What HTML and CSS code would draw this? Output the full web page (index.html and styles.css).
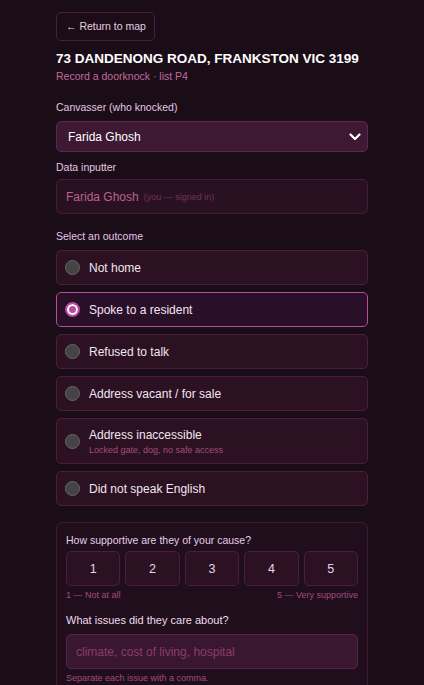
FILE: index.html
```html
<!DOCTYPE html>
<html lang="en">
<head>
  <meta charset="UTF-8">
  <meta name="viewport" content="width=device-width, initial-scale=1.0">
  <title>Record a doorknock</title>
  <link rel="stylesheet" href="styles.css">
</head>
<body>
  <div class="container">
    <a class="back-link" href="#">&larr; Return to map</a>

    <h1 class="address">73 DANDENONG ROAD, FRANKSTON VIC 3199</h1>
    <p class="subtitle">Record a doorknock &middot; list P4</p>

    <form id="knock-form">
      <div class="form-group">
        <label class="field-label" for="canvasser">Canvasser (who knocked)</label>
        <div class="select-wrap">
          <select id="canvasser" name="canvasser">
            <option>Farida Ghosh</option>
          </select>
          <svg class="chevron" width="12" height="8" viewBox="0 0 12 8">
            <path d="M1.5 1.5 L6 6 L10.5 1.5" fill="none" stroke="#fff" stroke-width="2.2" stroke-linecap="round" stroke-linejoin="round"/>
          </svg>
        </div>
      </div>

      <div class="form-group spaced">
        <span class="field-label tight">Data inputter</span>
        <div class="readonly-field">Farida Ghosh <span class="hint-inline">(you &mdash; signed in)</span></div>
      </div>

      <div class="form-group">
        <span class="field-label">Select an outcome</span>
        <div class="outcomes">
          <label class="outcome"><span class="radio"></span><span class="outcome-text">Not home</span></label>
          <label class="outcome selected"><span class="radio"></span><span class="outcome-text">Spoke to a resident</span></label>
          <label class="outcome"><span class="radio"></span><span class="outcome-text">Refused to talk</span></label>
          <label class="outcome"><span class="radio"></span><span class="outcome-text">Address vacant / for sale</span></label>
          <label class="outcome tall">
            <span class="radio"></span>
            <span class="outcome-text">Address inaccessible<small>Locked gate, dog, no safe access</small></span>
          </label>
          <label class="outcome"><span class="radio"></span><span class="outcome-text">Did not speak English</span></label>
        </div>
      </div>

      <div class="resident-box">
        <span class="box-label">How supportive are they of your cause?</span>
        <div class="scale">
          <button type="button">1</button>
          <button type="button">2</button>
          <button type="button">3</button>
          <button type="button">4</button>
          <button type="button">5</button>
        </div>
        <div class="scale-ends">
          <span>1 &mdash; Not at all</span>
          <span>5 &mdash; Very supportive</span>
        </div>

        <label class="box-label issues-label" for="issues">What issues did they care about?</label>
        <input type="text" id="issues" name="issues" placeholder="climate, cost of living, hospital">
        <p class="help">Separate each issue with a comma.</p>
      </div>
    </form>
  </div>
</body>
</html>
```

FILE: styles.css
```css
body {
  margin: 0;
  font-family: "Liberation Sans", Arial, sans-serif;
  background-color: #1b0d17;
  color: white;
}
.container {
  width: 312px;
  margin: 0 auto;
  padding-top: 12px;
}
.back-link {
  display: inline-block;
  box-sizing: border-box;
  height: 29px;
  line-height: 27px;
  padding: 0 8px 0 9px;
  border: 1px solid #4a1e3c;
  border-radius: 5px;
  color: #e6cde0;
  font-size: 10.5px;
  text-decoration: none;
}
.address {
  margin: 10px 0 0;
  font-size: 13.5px;
  line-height: 16px;
  font-weight: bold;
}
.subtitle {
  margin: 3px 0 0;
  font-size: 10.5px;
  line-height: 13px;
  color: #c06b9e;
}
#knock-form {
  margin-top: 18px;
}
.form-group {
  margin-bottom: 9px;
}
.form-group.spaced {
  margin-bottom: 16px;
}
.field-label {
  display: block;
  margin-bottom: 7px;
  font-size: 10.5px;
  line-height: 13px;
  color: #e2c8e4;
}
.field-label.tight {
  margin-bottom: 5px;
}
.select-wrap {
  position: relative;
}
select {
  width: 100%;
  height: 31px;
  padding: 0 11px;
  appearance: none;
  background-color: #3d1934;
  border: 1px solid #5a2850;
  border-radius: 5px;
  color: white;
  font-family: "Liberation Sans", Arial, sans-serif;
  font-size: 12px;
}
.chevron {
  position: absolute;
  right: 7px;
  top: 12px;
}
.readonly-field {
  box-sizing: border-box;
  height: 35px;
  padding: 0 9px;
  display: flex;
  align-items: center;
  background-color: #2a1121;
  border: 1px solid #441b38;
  border-radius: 5px;
  color: #b6648f;
  font-size: 12px;
}
.hint-inline {
  margin-left: 5px;
  font-size: 9px;
  color: #6f3358;
}
.outcomes {
  display: flex;
  flex-direction: column;
  gap: 7px;
}
.outcome {
  box-sizing: border-box;
  min-height: 35px;
  padding: 0 9px 0 8px;
  display: flex;
  align-items: center;
  gap: 9px;
  background-color: #2b1122;
  border: 1px solid #4b1d3e;
  border-radius: 5px;
  font-size: 12px;
  color: #f2e6f0;
}
.outcome.tall {
  min-height: 46px;
}
.outcome.selected {
  background-color: #2a0f29;
  border-color: #b54e9c;
}
.radio {
  box-sizing: border-box;
  flex: none;
  width: 15px;
  height: 15px;
  border-radius: 50%;
  background-color: #444;
  border: 1px solid #666;
}
.selected .radio {
  background-color: #b54e9c;
  border: 2px solid #b54e9c;
  box-shadow: inset 0 0 0 2px #fff;
}
.outcome-text small {
  display: block;
  margin-top: 3px;
  font-size: 9px;
  color: #a34c7e;
}
.resident-box {
  margin-top: 16px;
  padding: 11px 9px 6px;
  background-color: #200e1c;
  border: 1px solid #3e1a35;
  border-radius: 6px;
}
.box-label {
  display: block;
  font-size: 10.5px;
  line-height: 13px;
  color: #e6cfe8;
}
.scale {
  display: grid;
  grid-template-columns: repeat(5, 1fr);
  gap: 5px;
  margin-top: 4px;
}
.scale button {
  height: 35px;
  background-color: #2b1122;
  border: 1px solid #4b1d3e;
  border-radius: 5px;
  color: #e8d4e8;
  font-family: "Liberation Sans", Arial, sans-serif;
  font-size: 12.5px;
}
.scale-ends {
  display: flex;
  justify-content: space-between;
  margin-top: 4px;
  font-size: 9px;
  line-height: 11px;
  color: #a34c7e;
}
.issues-label {
  margin-top: 13px;
  font-size: 11px;
  color: #eedcf0;
}
input {
  box-sizing: border-box;
  width: 100%;
  height: 35px;
  margin-top: 7px;
  padding: 0 9px;
  background-color: #3a1730;
  border: 1px solid #53244a;
  border-radius: 5px;
  color: white;
  font-family: "Liberation Sans", Arial, sans-serif;
  font-size: 12px;
}
input::placeholder {
  color: #8a3c6c;
}
.help {
  margin: 4px 0 0;
  font-size: 9px;
  line-height: 11px;
  color: #a34c7e;
}
```
